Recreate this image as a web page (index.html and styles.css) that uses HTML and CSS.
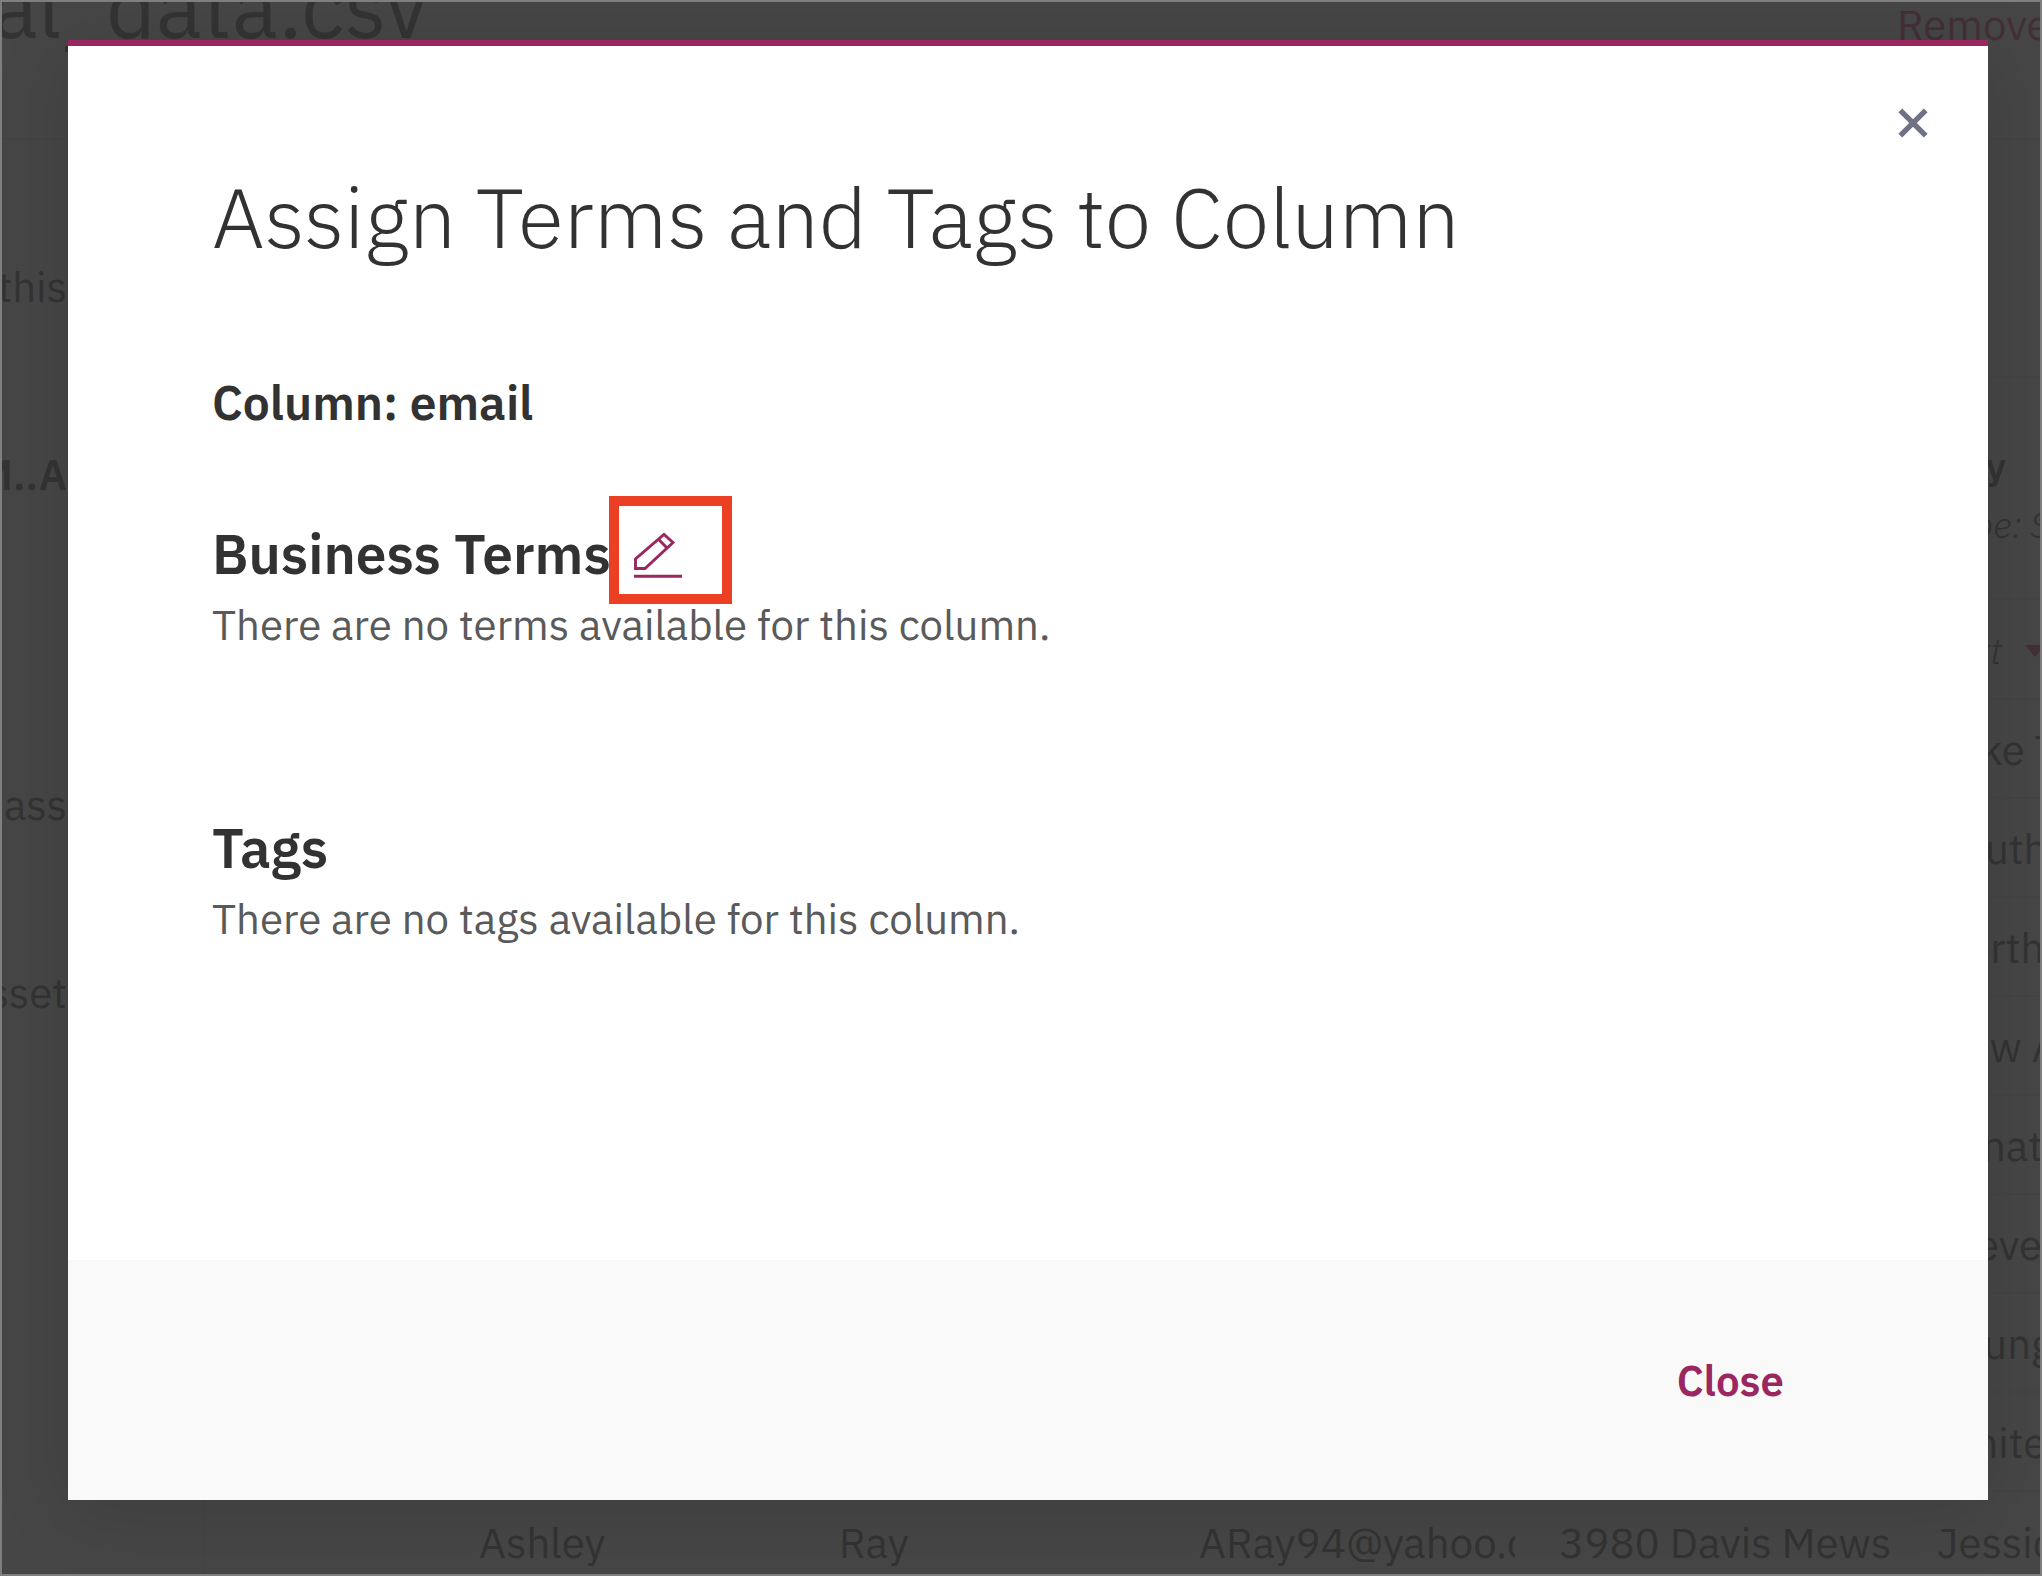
FILE: index.html
```html
<!DOCTYPE html>
<html lang="en">
<head>
<meta charset="utf-8">
<meta name="viewport" content="width=device-width, initial-scale=1">
<title>Assign Terms and Tags to Column</title>
<link rel="stylesheet" href="styles.css">
</head>
<body>
<div class="app">
  <div class="page" inert>
    <header class="page-header">
      <h1 class="page-title">al_data.csv</h1>
      <a class="page-action" href="#remove">Remove</a>
    </header>
    <div class="page-body">
      <aside class="sidebar">
        <div class="sidebar-group">
          <p class="sidebar-text">this</p>
          <p class="sidebar-text sidebar-name">M..A</p>
        </div>
        <div class="sidebar-group">
          <p class="sidebar-text">ass</p>
          <p class="sidebar-text">sset</p>
        </div>
      </aside>
      <main class="preview">
        <table class="data-table">
          <colgroup>
            <col class="col-index"><col class="col-data"><col class="col-data"><col class="col-data"><col class="col-address"><col>
          </colgroup>
          <thead>
            <tr class="row-head">
              <td colspan="5"></td>
              <th scope="col"><span class="col-name">City</span><span class="col-type">Type: S</span></th>
            </tr>
            <tr class="row-kind">
              <td colspan="5"></td>
              <td><span class="kind">Text <svg class="caret" viewBox="0 0 20 12" aria-hidden="true"><path d="M0 0h20L10 12z"/></svg></span></td>
            </tr>
          </thead>
          <tbody>
            <tr><td colspan="5"></td><td>Lake T</td></tr>
            <tr><td colspan="5"></td><td>South</td></tr>
            <tr><td colspan="5"></td><td>North</td></tr>
            <tr><td colspan="5"></td><td>New A</td></tr>
            <tr><td colspan="5"></td><td>Jonat</td></tr>
            <tr><td colspan="5"></td><td>Steve</td></tr>
            <tr><td colspan="5"></td><td>Young</td></tr>
            <tr><td colspan="5"></td><td>White</td></tr>
            <tr>
              <td></td>
              <td>Ashley</td>
              <td>Ray</td>
              <td><span class="clip">ARay94@yahoo.com</span></td>
              <td>3980 Davis Mews</td>
              <td>Jessic</td>
            </tr>
          </tbody>
        </table>
      </main>
    </div>
  </div>

  <div class="overlay">
    <section class="modal" role="dialog" aria-modal="true" aria-labelledby="modal-title">
      <header class="modal-header">
        <button class="icon-button close-icon" type="button" aria-label="Close dialog">
          <svg viewBox="0 0 30 30" aria-hidden="true"><path d="M2.3 2.3l25.4 25.4M27.7 2.3L2.3 27.7"/></svg>
        </button>
        <h2 class="modal-title" id="modal-title">Assign Terms and Tags to Column</h2>
      </header>
      <div class="modal-body">
        <p class="column-name">Column: email</p>
        <section class="block">
          <div class="block-heading">
            <h3>Business Terms</h3>
            <button class="icon-button edit-button" type="button" aria-label="Edit business terms">
              <svg viewBox="0 -6 48 54" aria-hidden="true"><path d="M1.5 35.5V26L30 1.5l9 8L11 35.5zM24.5 6.2l8.5 8.8M0 43.3h48"/></svg>
              <span class="callout"></span>
            </button>
          </div>
          <p>There are no terms available for this column.</p>
        </section>
        <section class="block">
          <div class="block-heading"><h3>Tags</h3></div>
          <p>There are no tags available for this column.</p>
        </section>
      </div>
      <footer class="modal-footer">
        <button class="text-button" type="button">Close</button>
      </footer>
    </section>
  </div>
</div>
</body>
</html>
```
FILE: styles.css
```css
:root {
  --accent: #9b2761;
  --text: #323232;
  --text-soft: #5a5a5a;
  --dim-bg: #464646;
  --dim-text: #333;
  --dim-line: #444;
  --dim-accent: #432f37;
}

* {
  box-sizing: border-box;
}

body {
  margin: 0;
  font-family: "IBM Plex Sans", Roboto, "Liberation Sans", sans-serif;
  font-size: 42px;
  line-height: 56px;
  color: var(--text);
}

h1, h2, h3, p {
  margin: 0;
}

button {
  margin: 0;
  padding: 0;
  border: 0;
  background: none;
  font: inherit;
  cursor: pointer;
}

.app {
  position: relative;
  height: 100vh;
  overflow: hidden;
  border: 2px solid #7f7f7f;
  background: var(--dim-bg);
}

/* Page behind the dialog, scrolled down a little */
.page {
  margin-top: -46px;
  color: var(--dim-text);
}

.page-header {
  display: grid;
  grid-template-columns: 1fr 143px;
  align-items: start;
  height: 184px;
  border-bottom: 2px solid var(--dim-line);
}

.page-title {
  margin-left: -10px;
  font-size: 86px;
  font-weight: 400;
  line-height: 100px;
}

.page-action {
  margin-top: 41px;
  color: var(--dim-accent);
  text-decoration: none;
  white-space: nowrap;
}

.page-body {
  display: flex;
}

.sidebar {
  display: flex;
  flex-direction: column;
  flex: 0 0 66px;
  gap: 274px;
  padding: 119px 1px 0 0;
  overflow: hidden;
}

.sidebar-group {
  display: flex;
  flex-direction: column;
  gap: 132px;
}

.sidebar-text {
  display: flex;
  justify-content: flex-end;
  white-space: nowrap;
}

.sidebar-name {
  font-weight: 600;
}

.preview {
  flex: 1;
  min-width: 0;
  margin-left: 135px;
  padding-top: 236px;
  border-left: 2px solid var(--dim-line);
}

.data-table {
  width: 100%;
  table-layout: fixed;
  border-collapse: collapse;
  white-space: nowrap;
}

.col-index {
  width: 252px;
}

.col-data {
  width: 360px;
}

.col-address {
  width: 378px;
}

.data-table tr {
  height: 99px;
}

.data-table .row-head {
  height: 222px;
}

.data-table .row-kind {
  height: 100px;
}

.data-table th,
.data-table td {
  padding: 3px 22px 0;
  border-top: 2px solid var(--dim-line);
  text-align: left;
}

.data-table th:last-child,
.data-table td:last-child {
  padding-right: 0;
}

.data-table th {
  padding-top: 60px;
  vertical-align: top;
}

.col-name,
.col-type,
.clip {
  display: block;
}

.col-name {
  font-size: 38px;
  font-weight: 600;
}

.col-type,
.kind {
  font-size: 36px;
  font-style: italic;
  font-weight: 300;
}

.col-type {
  margin-top: 3px;
}

.kind {
  display: flex;
  align-items: center;
  gap: 24px;
}

.caret {
  flex: none;
  width: 20px;
  height: 12px;
  fill: var(--dim-accent);
}

.clip {
  overflow: hidden;
}

/* Dialog */
.overlay {
  position: absolute;
  inset: 0;
  display: flex;
  padding: 38px 52px 74px 66px;
}

.modal {
  display: flex;
  flex: 1;
  flex-direction: column;
  border-top: 6px solid var(--accent);
  background: #fff;
  box-shadow: 0 12px 72px rgba(0, 0, 0, 0.12);
}

.modal-header {
  display: flex;
  flex-direction: column;
  gap: 14px;
  padding: 47px 45px 0 144px;
}

.modal-title {
  font-size: 84px;
  font-weight: 300;
  line-height: 100px;
}

.icon-button svg {
  display: block;
  fill: none;
}

.close-icon {
  align-self: flex-end;
  padding: 15px;
}

.close-icon svg {
  width: 30px;
  height: 30px;
  stroke: #6f7184;
  stroke-width: 5.4;
}

.modal-body {
  flex: 1;
  padding: 105px 144px 0;
}

.column-name {
  margin-bottom: 86px;
  font-size: 48px;
  font-weight: 600;
  line-height: 60px;
}

.block {
  margin-bottom: 159px;
  color: var(--text-soft);
}

.block-heading {
  display: flex;
  align-items: center;
  gap: 23px;
  margin-bottom: 7px;
  color: var(--text);
}

.block-heading h3 {
  font-size: 55px;
  font-weight: 600;
  line-height: 72px;
}

.edit-button {
  position: relative;
}

.edit-button svg {
  width: 48px;
  height: 54px;
  stroke: var(--accent);
  stroke-width: 2.9;
}

.callout {
  position: absolute;
  top: -31px;
  left: -25px;
  width: 123px;
  height: 108px;
  border: 10px solid #ec4025;
}

.modal-footer {
  display: flex;
  align-items: center;
  justify-content: flex-end;
  height: 240px;
  padding: 2px 204px 0 0;
  background: #f9f9f9;
}

.text-button {
  color: var(--accent);
  font-weight: 600;
}
```
